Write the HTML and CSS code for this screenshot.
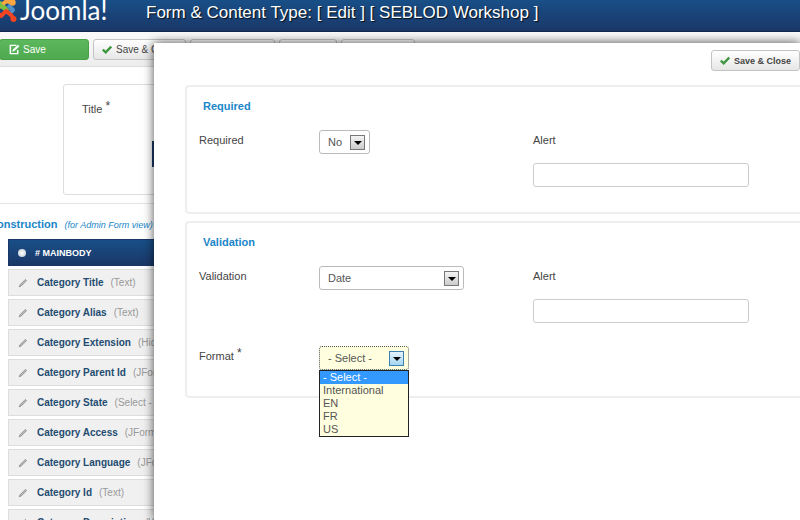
FILE: index.html
```html
<!DOCTYPE html>
<html lang="en">
<head>
  <meta charset="UTF-8">
  <meta name="viewport" content="width=device-width, initial-scale=1.0">
  <title>Form &amp; Content Type: [ Edit ] [ SEBLOD Workshop ]</title>
  <link rel="stylesheet" href="styles.css">
</head>
<body>

  <svg class="sprite" aria-hidden="true">
    <symbol id="icon-check" viewBox="0 0 10 10">
      <path d="M0.8 4.6 L3.7 7.4 L9.2 1.6" fill="none" stroke="#3f9640" stroke-width="2.3"/>
    </symbol>
    <symbol id="icon-pencil" viewBox="0 0 10 10">
      <path d="M1.2 8.8 L2 6.8 L7.4 1.4 L8.6 2.6 L3.2 8 Z" fill="#bbb" stroke="#888" stroke-width=".8"/>
    </symbol>
  </svg>

  <header class="header">
    <div class="logo">
      <svg class="logo-mark" viewBox="-12 -6 30 30" fill="none" stroke-width="4" stroke-linejoin="round">
        <path d="M-8 6 Q-9 1 -4 2 Q-1 2 1 4 L8 11" stroke="#7ac143"/>
        <path d="M-2 8 L4 3 Q7 0 11 3" stroke="#f9a541"/>
        <path d="M-2 3 L6 10" stroke="#7ac143"/>
        <path d="M8 5 L13 10 L9 14" stroke="#5091cd"/>
        <path d="M-6 10 L1 16 L6 11 M5 10 L11 15 Q13 17 13 19" stroke="#f44321"/>
        <circle cx="12.5" cy="2.5" r="3.2" fill="#f9a541"/>
        <circle cx="13.5" cy="19" r="3" fill="#f44321"/>
      </svg>
      <span class="logo-text">Joomla!</span>
    </div>
    <h1 class="page-title">Form &amp; Content Type: [ Edit ] [ SEBLOD Workshop ]</h1>
  </header>

  <div class="toolbar">
    <button type="button" class="btn btn-success">
      <svg class="icon-edit" viewBox="0 0 12 12" fill="none" stroke="#fff">
        <path d="M8 1.5 H1.5 V10.5 H9.5 V6.5" stroke-width="1.6"/>
        <path d="M4 8 L4.6 6 L9.7 1 L11 2.4 L6 7.4 Z" fill="#fff" stroke-width=".6"/>
      </svg>
      Save
    </button>
    <button type="button" class="btn btn-close"><svg class="icon"><use href="#icon-check"/></svg>Save &amp; Close</button>
    <button type="button" class="btn btn-new" aria-label="Save &amp; New"></button>
    <button type="button" class="btn btn-copy" aria-label="Save as Copy"></button>
    <button type="button" class="btn btn-cancel" aria-label="Cancel"></button>
  </div>

  <main class="content">
    <section class="title-area">
      <div class="title-box">
        <span class="label">Title <sup>*</sup></span>
        <span class="title-bar"></span>
      </div>
    </section>

    <section class="construction">
      <h2>Construction <em>(for Admin Form view)</em></h2>
      <ul class="fields">
        <li class="position"><span class="dot"></span><strong># MAINBODY</strong></li>
        <li><svg class="icon"><use href="#icon-pencil"/></svg><strong>Category Title</strong><span>(Text)</span></li>
        <li><svg class="icon"><use href="#icon-pencil"/></svg><strong>Category Alias</strong><span>(Text)</span></li>
        <li><svg class="icon"><use href="#icon-pencil"/></svg><strong>Category Extension</strong><span>(Hidden)</span></li>
        <li><svg class="icon"><use href="#icon-pencil"/></svg><strong>Category Parent Id</strong><span>(JForm)</span></li>
        <li><svg class="icon"><use href="#icon-pencil"/></svg><strong>Category State</strong><span>(Select - Simple)</span></li>
        <li><svg class="icon"><use href="#icon-pencil"/></svg><strong>Category Access</strong><span>(JForm)</span></li>
        <li><svg class="icon"><use href="#icon-pencil"/></svg><strong>Category Language</strong><span>(JForm)</span></li>
        <li><svg class="icon"><use href="#icon-pencil"/></svg><strong>Category Id</strong><span>(Text)</span></li>
        <li><svg class="icon"><use href="#icon-pencil"/></svg><strong>Category Description</strong><span>(Wysiwyg)</span></li>
      </ul>
    </section>
  </main>

  <div class="modal" role="dialog" aria-label="Validation">
    <div class="modal-actions">
      <button type="button" class="btn btn-bold"><svg class="icon"><use href="#icon-check"/></svg>Save &amp; Close</button>
    </div>

    <section class="panel">
      <h3>Required</h3>
      <div class="row">
        <label for="required">Required</label>
        <div class="control">
          <span class="select">
            <select id="required"><option>No</option></select>
            <i class="arrow"></i>
          </span>
        </div>
        <div class="alert">
          <label for="required-alert">Alert</label>
          <input type="text" id="required-alert">
        </div>
      </div>
    </section>

    <section class="panel">
      <h3>Validation</h3>
      <div class="row">
        <label for="validation">Validation</label>
        <div class="control">
          <span class="select select-wide">
            <select id="validation"><option>Date</option></select>
            <i class="arrow"></i>
          </span>
        </div>
        <div class="alert">
          <label for="validation-alert">Alert</label>
          <input type="text" id="validation-alert">
        </div>
      </div>
      <div class="row row-format">
        <label for="format">Format <sup>*</sup></label>
        <div class="control">
          <span class="select select-open">
            <select id="format"><option>- Select -</option></select>
            <i class="arrow"></i>
            <ul class="dropdown">
              <li class="active">- Select -</li>
              <li>International</li>
              <li>EN</li>
              <li>FR</li>
              <li>US</li>
            </ul>
          </span>
        </div>
      </div>
    </section>
  </div>

</body>
</html>
```
FILE: styles.css
```css
* {
  box-sizing: border-box;
}

body {
  margin: 0;
  height: 100vh;
  overflow: hidden;
  background: #fff;
  color: #444;
  font-family: "Liberation Sans", Arial, sans-serif;
  font-size: 11px;
  line-height: 16px;
}

h1, h2, h3, ul {
  margin: 0;
  padding: 0;
}

ul {
  list-style: none;
}

button, input, select {
  font-family: inherit;
  font-size: inherit;
}

sup {
  font-size: 12px;
  line-height: 0;
  vertical-align: 3px;
}

.sprite {
  display: none;
}

.icon {
  width: 10px;
  height: 10px;
  flex: none;
}

/* header */

.header {
  display: flex;
  height: 32px;
  background: linear-gradient(#184f87, #1b3768);
  border-bottom: 1px solid #12294f;
}

.logo {
  display: flex;
  width: 146px;
  flex: none;
}

.logo-mark {
  width: 30px;
  height: 30px;
  margin: -6px 2px 0 -12px;
  flex: none;
}

.logo-text {
  color: #fff;
  font-family: Lato, sans-serif;
  font-size: 26px;
  line-height: 20px;
}

.page-title {
  color: #fff;
  font-size: 17px;
  font-weight: normal;
  line-height: 26px;
  text-shadow: 1px 1px 1px rgba(0, 0, 0, 0.8);
  white-space: nowrap;
}

/* toolbar */

.toolbar {
  display: flex;
  gap: 4px;
  height: 35px;
  padding-top: 7px;
  background: linear-gradient(#fafafa, #ededed);
  border-bottom: 1px solid #ddd;
}

.btn {
  display: flex;
  align-items: center;
  gap: 4px;
  height: 21px;
  padding: 0 8px;
  background: linear-gradient(#fff, #e6e6e6);
  border: 1px solid #c4c4c4;
  border-radius: 3px;
  color: #444;
  font-size: 10px;
  white-space: nowrap;
  flex: none;
}

.btn-success {
  width: 90px;
  margin-left: -1px;
  gap: 3px;
  padding-left: 9px;
  background: linear-gradient(#5cb85c, #4faa4f);
  border-color: #48a048;
  color: #fff;
}

.btn-close {
  width: 93px;
}

.btn-new {
  width: 85px;
}

.btn-copy {
  width: 58px;
}

.btn-cancel {
  width: 74px;
}

.icon-edit {
  width: 11px;
  height: 11px;
}

/* content behind the modal */

.title-area {
  height: 137px;
  padding: 17px 0 0 63px;
  border-bottom: 1px solid #e4e4e4;
}

.title-box {
  position: relative;
  height: 111px;
  padding: 16px 18px;
  border: 1px solid #ddd;
  border-radius: 3px;
}

.title-bar {
  position: absolute;
  top: 56px;
  left: 88px;
  width: 20px;
  height: 26px;
  background: #1b3768;
}

.construction {
  padding: 12px 0 0 8px;
}

.construction h2 {
  margin: 0 0 6px -19px;
  color: #1a86c8;
  font-size: 11px;
  white-space: nowrap;
}

.construction h2 em {
  margin-left: 4px;
  font-size: 9px;
  font-weight: normal;
}

.fields li {
  display: flex;
  align-items: center;
  height: 27px;
  margin-bottom: 3px;
  padding-left: 9px;
  background: #f0f0f0;
  border: 1px solid #ddd;
  font-size: 10px;
  white-space: nowrap;
}

.fields strong {
  margin: 0 7px 0 9px;
  color: #1f4c70;
}

.fields span {
  color: #999;
}

.fields .position {
  background: linear-gradient(#184f87, #1b3768);
  border-color: #1b3768;
  font-size: 9px;
}

.fields .position strong {
  color: #fff;
}

.dot {
  width: 8px;
  height: 8px;
  background: radial-gradient(#fff, #bcc6d2);
  border-radius: 50%;
}

/* modal */

.modal {
  position: absolute;
  top: 43px;
  right: 0;
  bottom: 0;
  left: 154px;
  padding: 7px 0 0 31px;
  background: #fff;
  box-shadow: 0 0 10px rgba(0, 0, 0, 0.7);
}

.modal-actions {
  display: flex;
  justify-content: flex-end;
  margin-bottom: 14px;
}

.btn-bold {
  gap: 4px;
  font-size: 9px;
  font-weight: bold;
}

.panel {
  margin-bottom: 7px;
  padding: 13px 0 0 12px;
  border: 2px solid #eee;
  border-right: 0;
  border-radius: 4px 0 0 4px;
}

.panel h3 {
  margin: -2px 0 18px 4px;
  color: #1a86c8;
  font-size: 11px;
}

.row {
  display: grid;
  grid-template-columns: 120px 214px 1fr;
  height: 80px;
}

.row-format {
  height: 48px;
}

.control {
  margin-top: -2px;
}

.alert label {
  display: block;
  margin-bottom: 15px;
}

.alert input {
  display: block;
  width: 216px;
  height: 24px;
  border: 1px solid #ccc;
  border-radius: 3px;
}

.select {
  position: relative;
  display: inline-block;
  width: 51px;
}

.select select {
  width: 100%;
  height: 24px;
  padding: 0 8px;
  appearance: none;
  background: #fff;
  border: 1px solid #bbb;
  border-radius: 3px;
  color: #555;
}

.arrow {
  position: absolute;
  top: 5px;
  right: 5px;
  width: 15px;
  height: 15px;
  background: linear-gradient(#f4f4f4, #ccc);
  border: 1px solid #777;
  pointer-events: none;
}

.arrow::after {
  content: "";
  position: absolute;
  top: 5px;
  left: 3px;
  border: 4px solid transparent;
  border-top-color: #000;
  border-bottom: 0;
}

.select-wide {
  width: 145px;
}

.select-open {
  width: 90px;
}

.select-open select {
  background: #ffffdf;
  border: 1px dotted #555;
}

.select-open .arrow {
  background: linear-gradient(#e4f3fc, #a5d5f2);
  border-color: #3c7fb1;
}

.dropdown {
  position: absolute;
  top: 24px;
  left: 0;
  width: 100%;
  background: #ffffdf;
  border: 1px solid #222;
  color: #555;
  line-height: 13px;
}

.dropdown li {
  padding-left: 3px;
}

.dropdown .active {
  background: #3399ff;
  color: #fff;
}
```
